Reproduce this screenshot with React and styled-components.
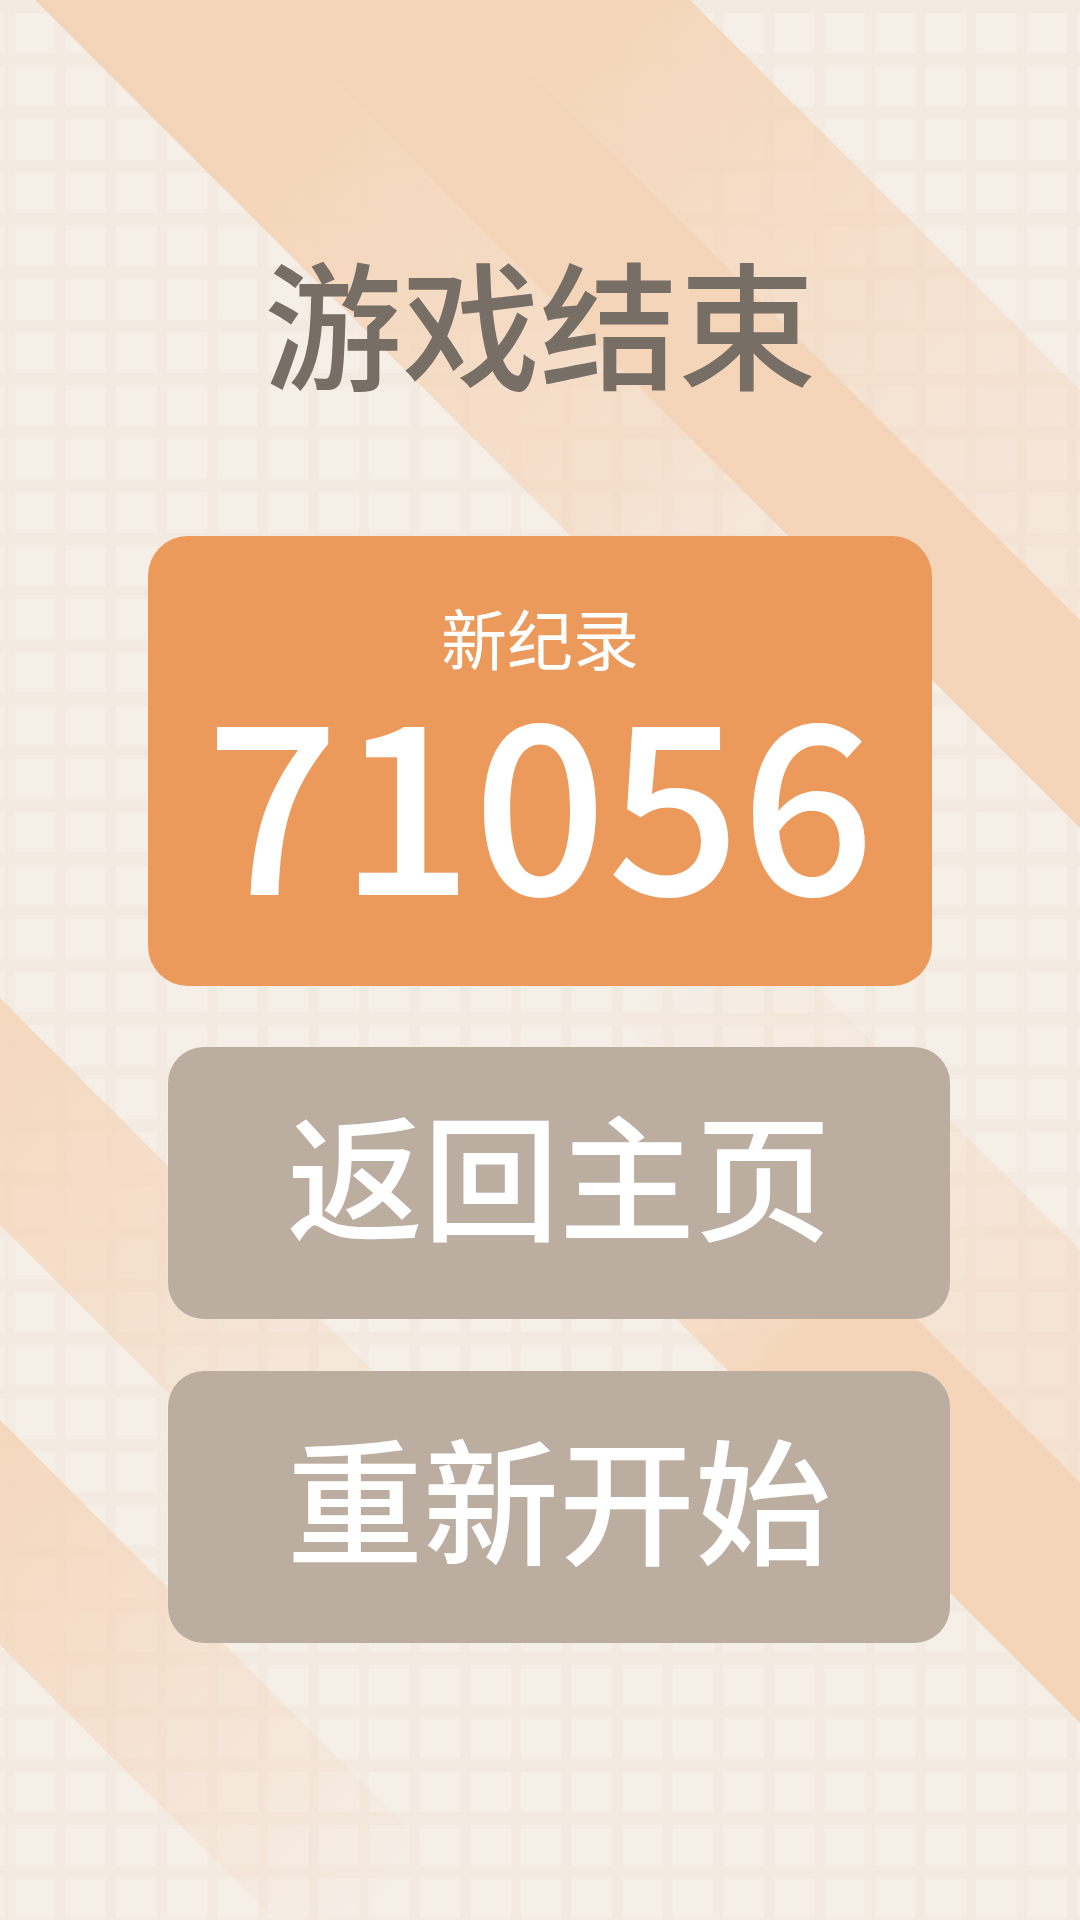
import React from 'react'
import styled, { createGlobalStyle } from 'styled-components'

const GlobalStyle = createGlobalStyle`
    html, body {
        margin: 0;
        padding: 0;
    }
    body {
        font-family: "Noto Sans CJK SC", "Noto Sans", sans-serif;
        background: #f3ebe2;
    }
`;

const Screen = styled.div`
    position: relative;
    width: 1080px;
    height: 1920px;
    overflow: hidden;
    background-color: #f5efe8;
    background-image:
        linear-gradient(90deg, #f3eae1 0 10px, transparent 10px),
        linear-gradient(180deg, #f3eae1 0 13px, transparent 13px);
    background-size: 50.6px 100%, 100% 53.3px;
    background-position: 5px 0, 0 0;
`;

const Backdrop = styled.svg`
    position: absolute;
    inset: 0;
    width: 100%;
    height: 100%;
    z-index: 0;
    pointer-events: none;
`;

const Content = styled.main`
    position: relative;
    z-index: 1;
    display: flex;
    flex-direction: column;
    align-items: center;
    padding-top: 250px;
`;

const Title = styled.h1`
    margin: 0;
    font-size: 138px;
    line-height: 1;
    font-weight: 500;
    color: #776e65;
`;

const RecordCard = styled.section`
    box-sizing: border-box;
    width: 784px;
    height: 450px;
    margin-top: 148px;
    padding-top: 67px;
    border-radius: 40px;
    background: #eb9a5c;
    color: #ffffff;
    display: flex;
    flex-direction: column;
    align-items: center;
`;

const RecordLabel = styled.div`
    font-size: 66px;
    line-height: 1;
    font-weight: 400;
`;

const Score = styled.div`
    margin-top: 6px;
    font-size: 235px;
    line-height: 1;
    font-weight: 500;
`;

const Actions = styled.div`
    display: flex;
    flex-direction: column;
    gap: 52px;
    margin-top: 61px;
    margin-left: 38px;
`;

const ActionButton = styled.button`
    box-sizing: border-box;
    width: 782px;
    height: 272px;
    padding: 0 0 22px;
    border: none;
    border-radius: 36px;
    background: #bbada0;
    color: #ffffff;
    font-family: inherit;
    font-size: 136px;
    line-height: 1;
    font-weight: 500;
    display: flex;
    align-items: center;
    justify-content: center;
    cursor: pointer;
`;

// d = x - y band, fade runs along x + y
const stripes = [
    { id: 's1', d1: 35, d2: 252, stops: [[400, 1], [1100, 0.55], [1500, 0]] },
    { id: 's2', d1: 252, d2: 460, stops: [[0, 1], [3000, 1]] },
    { id: 's3', d1: 460, d2: 690, stops: [[600, 1], [1300, 0.45], [1800, 0.2]] },
    { id: 's4', d1: -402, d2: -170, stops: [[1600, 0], [2300, 0.45], [3000, 0.45]] },
    { id: 's5', d1: -643, d2: -402, stops: [[1750, 0], [2150, 1], [3000, 1]] },
    { id: 's6', d1: -1225, d2: -998, stops: [[1000, 0.9], [1500, 0.5], [2000, 0]] },
    { id: 's7', d1: -1645, d2: -1420, stops: [[1450, 0.9], [1900, 0.45], [2300, 0]] },
];

const band = (d1, d2) =>
    `${d1 - 200},-200 ${d2 - 200},-200 ${d2 + 2200},2200 ${d1 + 2200},2200`;

const Stripes = () => (
    <Backdrop viewBox="0 0 1080 1920" preserveAspectRatio="none">
        <defs>
            {stripes.map((s) => {
                const first = s.stops[0][0];
                const last = s.stops[s.stops.length - 1][0];
                return (
                    <linearGradient
                        key={s.id}
                        id={s.id}
                        gradientUnits="userSpaceOnUse"
                        x1={first / 2}
                        y1={first / 2}
                        x2={last / 2}
                        y2={last / 2}
                    >
                        {s.stops.map(([at, a]) => (
                            <stop
                                key={at}
                                offset={(at - first) / (last - first)}
                                stopColor="#f5d5b9"
                                stopOpacity={a}
                            />
                        ))}
                    </linearGradient>
                );
            })}
        </defs>
        {stripes.map((s) => (
            <polygon key={s.id} points={band(s.d1, s.d2)} fill={`url(#${s.id})`} />
        ))}
    </Backdrop>
);

const App = () => {
    return (
        <Screen>
            <GlobalStyle />
            <Stripes />
            <Content>
                <Title>游戏结束</Title>
                <RecordCard>
                    <RecordLabel>新纪录</RecordLabel>
                    <Score>71056</Score>
                </RecordCard>
                <Actions>
                    <ActionButton>返回主页</ActionButton>
                    <ActionButton>重新开始</ActionButton>
                </Actions>
            </Content>
        </Screen>
    )
}
export default App
